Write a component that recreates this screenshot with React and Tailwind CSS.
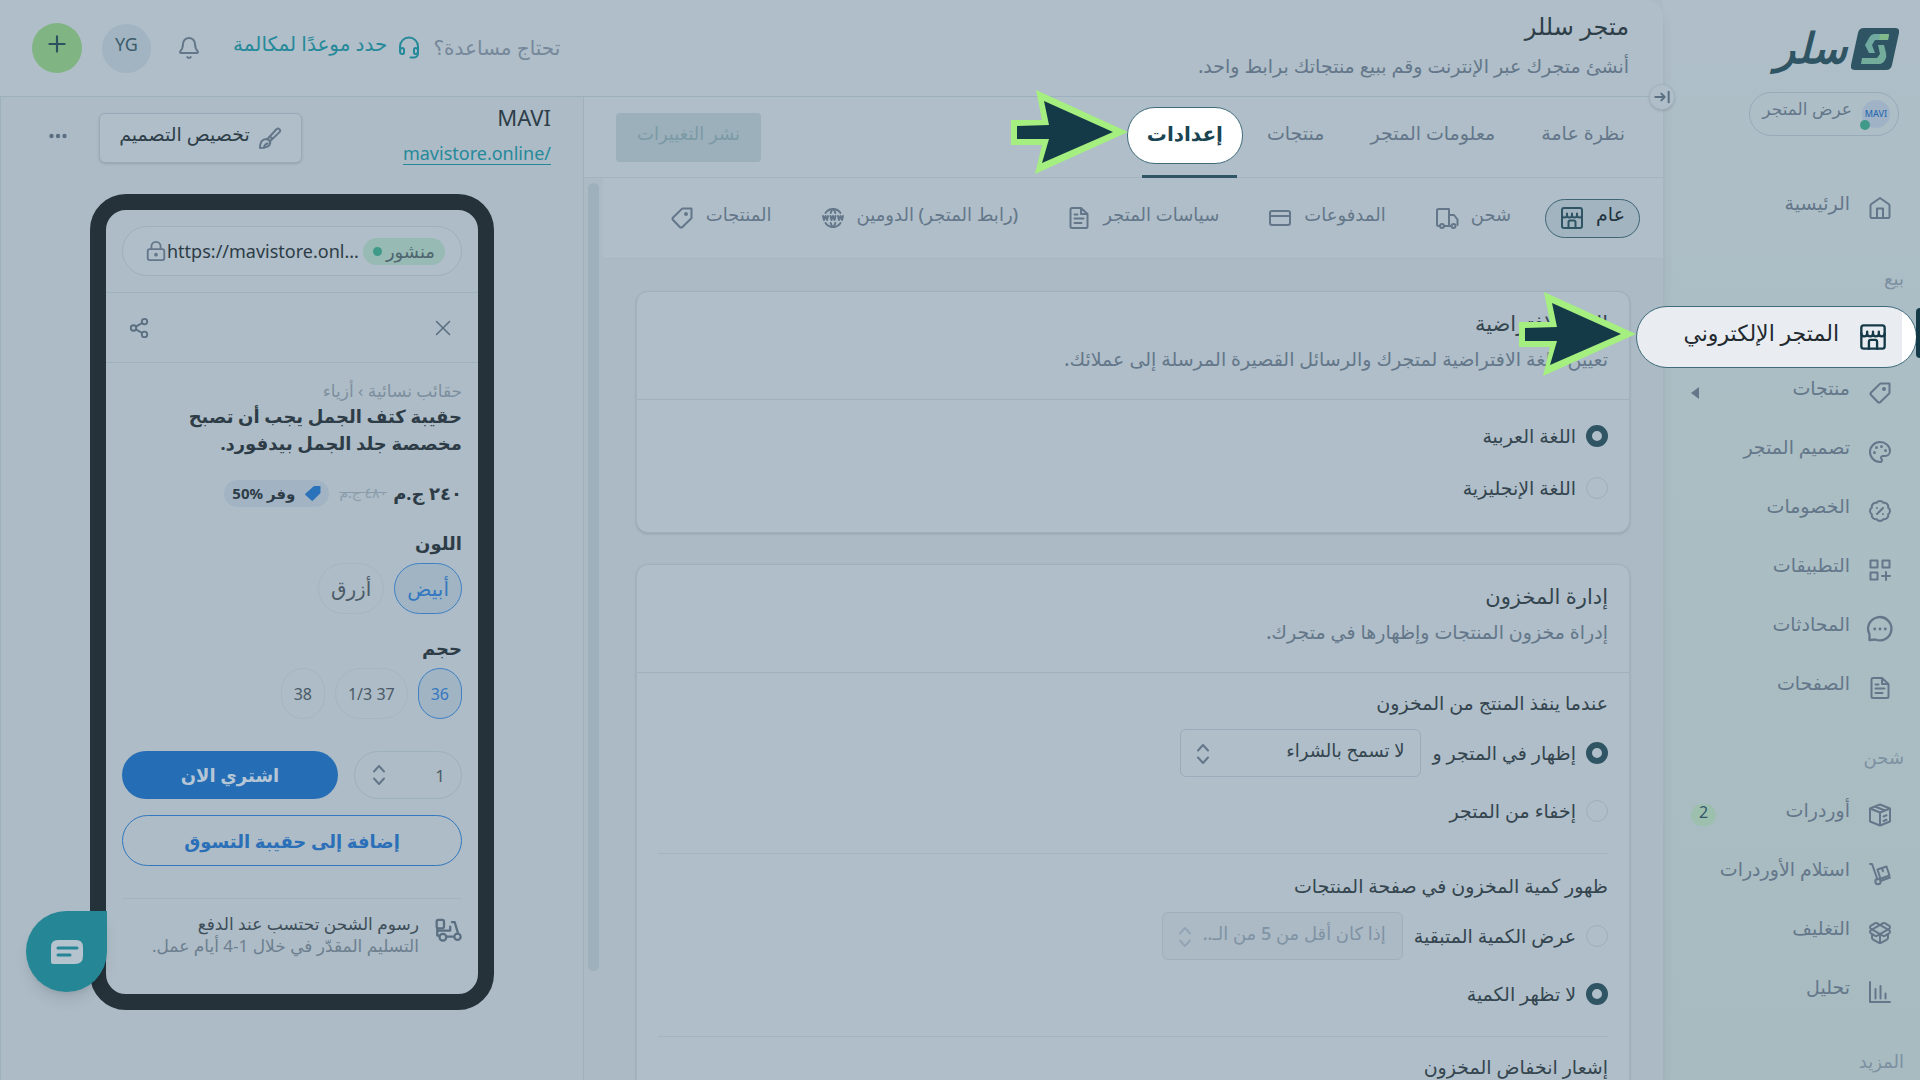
import React, { useState } from "react";
import {
  BadgePercent,
  Bell,
  CreditCard,
  LockKeyhole,
  PackageOpen,
  Palette,
  Plus,
  Share2,
  X,
} from "lucide-react";
import { TbWorldWww } from "react-icons/tb";

const Svg = ({ size = 24, strokeWidth = 2, className = "", children }) => (
  <svg
    width={size}
    height={size}
    viewBox="0 0 24 24"
    fill="none"
    stroke="currentColor"
    strokeWidth={strokeWidth}
    strokeLinecap="round"
    strokeLinejoin="round"
    className={`shrink-0 ${className}`}
    aria-hidden="true"
  >
    {children}
  </svg>
);

const HomeIcon = (props) => (
  <Svg {...props}>
    <path d="M2.5 9.5a1.5 1.5 0 0 1 .6-1.2L12 2l8.9 6.3a1.5 1.5 0 0 1 .6 1.2v11a1.5 1.5 0 0 1-1.5 1.500H4a1.5 1.5 0 0 1-1.5-1.500z" />
    <path d="M9 22v-9.500h6V22" />
  </Svg>
);

const StoreIcon = (props) => (
  <Svg {...props}>
    <rect x="2" y="2" width="20" height="20" rx="2" />
    <path d="M2 9a2.500 2.500 0 0 0 5 0 2.500 2.500 0 0 0 5 0 2.500 2.500 0 0 0 5 0 2.500 2.500 0 0 0 5 0M7 9V7.500M12 9V7.500M17 9V7.500" />
    <path d="M8.500 22v-6a1.500 1.500 0 0 1 1.500-1.500h4a1.500 1.500 0 0 1 1.500 1.500v6" />
  </Svg>
);

const TagIcon = (props) => (
  <Svg {...props}>
    <path d="M21.500 2.500H13a2 2 0 0 0-1.400.6l-8.500 8.400a1.800 1.800 0 0 0 0 2.500l6.700 7a1.800 1.800 0 0 0 2.600 0l8.500-8.200a2 2 0 0 0 .6-1.400z" />
    <circle cx="16" cy="8" r="1" fill="currentColor" />
  </Svg>
);

const AppsIcon = (props) => (
  <Svg {...props}>
    <path d="M2.500 2.500h7v7h-7zM14.500 2.500h7v7h-7zM2.500 14.500h7v7h-7zM18 14v8M14 18h8" />
  </Svg>
);

const ChatIcon = (props) => (
  <Svg {...props}>
    <path d="M3 21.500v-5A10 10 0 1 1 8 21z" />
    <path d="M7.500 12h.01M12 12h.01M16.500 12h.01" strokeWidth="2.500" />
  </Svg>
);

const PageIcon = (props) => (
  <Svg {...props}>
    <path d="M14 2H5a1.500 1.500 0 0 0-1.500 1.500v17A1.500 1.500 0 0 0 5 22h14a1.500 1.500 0 0 0 1.500-1.500V8zM14 2v6h6.500M7.500 8.500h3M7.500 12.500h9M7.500 17h7" />
  </Svg>
);

const BoxIcon = (props) => (
  <Svg {...props}>
    <path d="M12 1.500 2 5.500v13l10 4 10-4v-13zM2 5.500l10 4 10-4M12 9.500v13M7 3.500l10 4M15.500 13.500l3-1.200M15.500 18l3-1.200" />
  </Svg>
);

const DollyIcon = (props) => (
  <Svg {...props}>
    <path d="M2 2h2l5.500 15.500M12.500 19l9.500-3.500" />
    <circle cx="10" cy="19.500" r="2.700" />
    <path d="M9.500 7.500 18.500 4.500 21.500 13.500l-9 3.200zM14 6l1 3.200" />
  </Svg>
);

const ChartIcon = (props) => (
  <Svg {...props}>
    <path d="M2 2v20h20M7.500 9v9.500M12.500 6v12.500M17.500 13.500v5" />
  </Svg>
);

const TruckIcon = (props) => (
  <Svg {...props}>
    <path d="M4.500 20h-1A1.500 1.500 0 0 1 2 18.500v-14A1.500 1.500 0 0 1 3.500 3H14v17H9.500M14 9h5l3.500 4.500V19M14 20h2" />
    <circle cx="7" cy="20" r="2" />
    <circle cx="18.500" cy="20" r="2" />
  </Svg>
);

const HeadsetIcon = (props) => (
  <Svg {...props}>
    <path d="M3 13.500V10.500a9 9 0 0 1 18 0V17a4 4 0 0 1-4 4.500h-3.500" />
    <path d="M3 13.500v2A2.500 2.500 0 0 0 5.500 18 1.500 1.500 0 0 0 7 16.500v-3A1.500 1.500 0 0 0 5.500 12 2.500 2.500 0 0 0 3 14.500M21 14.500A2.500 2.500 0 0 0 18.500 12 1.500 1.500 0 0 0 17 13.500v3a1.500 1.500 0 0 0 1.500 1.500 2.500 2.500 0 0 0 2.500-2.500" />
  </Svg>
);

const BrushIcon = (props) => (
  <Svg {...props}>
    <path d="M9 13.500 18.500 3.300a2 2 0 0 1 3 2.800L11.500 15.800M12 10.500l2.500 2.500M8.500 13a3.700 3.700 0 0 1 3.700 4.200C11.800 20 9 22 2 22c0-4 .5-9 6.500-9zM6 22c0-3 2-4 3.500-4.500" />
  </Svg>
);

const ScooterIcon = (props) => (
  <Svg {...props}>
    <rect x="1.500" y="2.500" width="6.500" height="7.500" rx="1.500" />
    <path d="M2 10v6.500h1.500M2 12h11.500V8.500M10 17.500h6.500M15 4.500h2.500l3 10" />
    <circle cx="7" cy="18" r="3" />
    <circle cx="20" cy="17.500" r="2.800" />
  </Svg>
);

const SortIcon = ({ className }) => (
  <svg
    width="14"
    height="22"
    viewBox="0 0 14 22"
    fill="none"
    stroke="currentColor"
    strokeWidth="2"
    strokeLinecap="round"
    strokeLinejoin="round"
    className={`pointer-events-none shrink-0 ${className || ""}`}
    aria-hidden="true"
  >
    <path d="M2 7.500 7 2l5 5.500M2 14.500 7 20l5-5.500" />
  </svg>
);

const Pointer = ({ className }) => (
  <svg width="117" height="84" viewBox="0 0 117 84" className={className} aria-hidden="true">
    <path d="M0 30h31L25 0l92 42-93 42 7-29H0z" fill="#a5ee80" />
    <path d="M6 36l32-1-5-24 69 31-71 31 7-24H6z" fill="#143a48" />
  </svg>
);

const sellLinks = [
  { label: "منتجات", Icon: TagIcon, arrow: true },
  { label: "تصميم المتجر", Icon: Palette },
  { label: "الخصومات", Icon: BadgePercent },
  { label: "التطبيقات", Icon: AppsIcon },
  { label: "المحادثات", Icon: ChatIcon, size: 28 },
  { label: "الصفحات", Icon: PageIcon },
];

const shipLinks = [
  { label: "أوردرات", Icon: BoxIcon, count: 2 },
  { label: "استلام الأوردرات", Icon: DollyIcon },
  { label: "التغليف", Icon: PackageOpen },
  { label: "تحليل", Icon: ChartIcon },
];

const subTabs = [
  { label: "شحن", Icon: TruckIcon },
  { label: "المدفوعات", Icon: CreditCard },
  { label: "سياسات المتجر", Icon: PageIcon },
  { label: "(رابط المتجر) الدومين", Icon: TbWorldWww },
  { label: "المنتجات", Icon: TagIcon },
];

const NavItem = ({ label, Icon, size = 24, arrow, count }) => (
  <li>
    <a href="#" className="flex h-[59px] items-center pr-7 pl-7 text-[#64778a]">
      <span className="flex w-6 shrink-0 justify-center">
        <Icon size={size} className="shrink-0" />
      </span>
      <span className="mr-[18px] pb-2.5 text-[19px] leading-6 font-medium whitespace-nowrap">{label}</span>
      {arrow && (
        <svg width="8" height="12" viewBox="0 0 8 12" className="mr-auto" fill="currentColor" aria-hidden="true">
          <path d="M8 0v12L0 6z" />
        </svg>
      )}
      {count && (
        <span className="mr-auto flex h-[22px] w-[25px] items-start justify-center rounded-full bg-[#9dbfae] text-base leading-4 text-[#33566a]">
          {count}
        </span>
      )}
    </a>
  </li>
);

const Sidebar = () => (
  <aside className="w-[257px] shrink-0 bg-linear-to-b from-[#afbec8] via-[#abbec4] via-40% to-[#a8bbc0]">
    <div className="flex items-center gap-1 pt-7 pr-[21px]">
      <svg width="48" height="42" viewBox="0 0 48 42" aria-hidden="true">
        <path d="M13 0h31q5 0 4 5l-7 32q-1 5-6 5H4q-5 0-4-5L7 5q1-5 6-5z" fill="#2f5463" />
        <path d="M14 17l4-7q2-4 6-4h14l-1 6H24l-3 5 3 8h-6z" fill="#6fa9a0" />
        <path d="M29 6h9l-1 6h-9z" fill="#82b98a" />
        <path d="M27 17h6l2 8q1 4-1 7-2 4-6 4H10l1-6h15l3-4z" fill="#74ac9c" />
      </svg>
      <span className="pb-1 text-[42px] leading-[38px] font-black text-[#2f5463] italic">سلر</span>
    </div>

    <a
      href="#"
      className="mt-[22px] mr-[21px] flex h-11 w-[150px] items-center gap-2.5 rounded-full border border-[#98a9b8] pr-2 text-[#64778a]"
    >
      <span className="relative flex size-7 items-center justify-center rounded-full bg-[#a0b3c6] text-[9px] font-medium text-[#2a6bb0]" dir="ltr">
        MAVI
        <span className="absolute -bottom-0.5 -left-0.5 size-2.5 rounded-full bg-[#409a8a]"></span>
      </span>
      <span className="pb-2.5 text-[17px] leading-6 font-medium whitespace-nowrap">عرض المتجر</span>
    </a>

    <nav className="mt-[42px]">
      <ul>
        <NavItem label="الرئيسية" Icon={HomeIcon} />
      </ul>
      <h2 className="mt-[29px] pr-4 text-lg leading-6 text-[#7d90a2]">بيع</h2>
      <ul className="mt-[18px]">
        <li className="relative z-20 h-[55px]">
          <a
            href="#"
            className="absolute -top-0.5 right-[3px] flex h-[62px] w-[281px] items-center rounded-full border border-[#3f6b7a] bg-linear-to-l from-white from-5% to-[#e9edf1] to-5% pr-[29px] text-[#22292f]"
          >
            <StoreIcon size={28} className="text-[#143a48]" />
            <span className="mr-5 pb-2.5 text-[22px] leading-7 whitespace-nowrap">المتجر الإلكتروني</span>
          </a>
          <span className="absolute top-0 right-0 h-[50px] w-1 rounded-l-md bg-[#143a48]"></span>
          <Pointer className="absolute -top-4 right-[284px]" />
        </li>
        {sellLinks.map((link) => (
          <NavItem key={link.label} {...link} />
        ))}
      </ul>
      <h2 className="mt-7 pr-4 text-lg leading-6 text-[#7d90a2]">شحن</h2>
      <ul className="mt-4">
        {shipLinks.map((link) => (
          <NavItem key={link.label} {...link} />
        ))}
      </ul>
      <h2 className="mt-7 pr-4 text-lg leading-6 text-[#7d90a2]">المزيد</h2>
    </nav>
  </aside>
);

const Header = () => (
  <header className="relative flex h-[97px] shrink-0 items-center justify-between rounded-tr-2xl border-b border-[#9db0be] bg-[#afbec8] pr-[34px] pl-8">
    <div className="self-start pt-2.5">
      <h1 className="text-2xl leading-8 text-[#2e3e49]">متجر سللر</h1>
      <p className="mt-3 text-[19px] leading-6 font-medium text-[#64778a]">
        أنشئ متجرك عبر الإنترنت وقم ببيع منتجاتك برابط واحد.
      </p>
    </div>
    <div className="flex items-center">
      <span className="text-xl leading-7 text-[#76889a]">تحتاج مساعدة؟</span>
      <a href="#" className="mr-3 flex items-center gap-2.5 text-[#26899a]">
        <HeadsetIcon size={24} />
        <span className="pb-2 text-xl leading-6">حدد موعدًا لمكالمة</span>
      </a>
      <button aria-label="الإشعارات" className="mr-8 text-[#64778a]">
        <Bell size={24} />
      </button>
      <button className="mr-[26px] flex size-[49px] justify-center rounded-full bg-[#a2b4c1] pt-2 text-lg leading-6 text-[#3a5c6b]">
        YG
      </button>
      <button aria-label="إضافة" className="mr-5 flex size-[50px] justify-center rounded-full bg-[#80b482] pt-2 text-[#2c5160]">
        <Plus size={26} />
      </button>
    </div>
    <button
      aria-label="طي القائمة"
      className="absolute top-[84px] -right-3 z-10 flex size-[26px] items-center justify-center rounded-full border border-[#a3b4c0] bg-[#afbec8] text-[#5b6f82] shadow"
    >
      <Svg size={16} strokeWidth={3}>
        <path d="M2 12h14M11 7l5 5-5 5M22 4v16" />
      </Svg>
    </button>
  </header>
);

const Tabs = () => (
  <div className="flex h-[81px] shrink-0 items-center justify-between border-b border-[#a3b4c0] bg-[#afbec8] pr-[38px] pl-8">
    <nav className="flex h-full gap-[46px] text-[19px] font-medium text-[#64778a]">
      <a href="#" className="pt-6 leading-6">نظرة عامة</a>
      <a href="#" className="pt-6 leading-6">معلومات المتجر</a>
      <a href="#" className="pt-6 leading-6">منتجات</a>
      <div className="relative -mr-[22px] pt-[10px]">
        <a
          href="#"
          className="flex h-[57px] w-[116px] items-center justify-center rounded-[28px] border border-[#3f6b7a] bg-white pb-1 text-xl leading-6 font-bold text-[#1b4453]"
        >
          إعدادات
        </a>
        <span className="absolute right-1.5 -bottom-px h-[3px] w-[95px] bg-[#2f5463]"></span>
        <Pointer className="absolute top-[-7px] right-[115px]" />
      </div>
    </nav>
    <button disabled className="h-[49px] w-[145px] rounded bg-[#9bb0bb] pb-2 text-lg font-medium text-[#7b9aa5]">
      نشر التغييرات
    </button>
  </div>
);

const SubTabs = () => (
  <div className="flex h-[81px] items-center gap-[19px] border-b border-[#a8b8c3] bg-[#afbec8] pr-[23px]">
    <button className="flex h-[39px] items-center gap-3 rounded-full border border-[#3f6574] bg-[#a1b4c0] px-3.5 font-medium text-[#22333d]">
      <span className="pb-2 text-[19px] leading-6">عام</span>
      <StoreIcon size={24} className="text-[#2f5463]" />
    </button>
    {subTabs.map(({ label, Icon }) => (
      <button key={label} className="flex items-center gap-3 px-[15px] text-[#64778a]">
        <span className="pb-2 text-lg leading-6 font-medium whitespace-nowrap">{label}</span>
        <Icon size={24} />
      </button>
    ))}
  </div>
);

const Option = ({ name, label, checked, onChange, children }) => (
  <div className="flex items-center">
    <label className="flex items-center gap-2.5 text-[19px] leading-6 font-medium text-[#34454f]">
      <input
        type="radio"
        name={name}
        checked={checked}
        onChange={onChange}
        className="size-[22px] appearance-none rounded-full border border-[#9eafbc] checked:border-[6px] checked:border-[#2f5463]"
      />
      {label}
    </label>
    {children}
  </div>
);

const SelectBox = ({ label, option, disabled }) => (
  <div className="relative mr-[11px]">
    <select
      aria-label={label}
      disabled={disabled}
      className="h-12 w-[241px] appearance-none rounded-md border border-[#9aacbb] bg-transparent pr-4 pb-1.5 pl-10 text-lg font-medium text-[#34454f] disabled:border-[#9fb0bd] disabled:bg-[#abbac5] disabled:text-[#8093a4] disabled:opacity-100"
    >
      <option>{option}</option>
    </select>
    <SortIcon className={disabled ? "absolute top-3.5 left-4 text-[#93a5b4]" : "absolute top-3.5 left-4 text-[#64778a]"} />
  </div>
);

const Card = ({ title, text, children }) => (
  <section className="rounded-xl border border-[#a0b1be] bg-[#afbec8] shadow-sm">
    <div className="border-b border-[#a0b1be] px-[21px] pt-[15px] pb-6">
      <h2 className="text-[21px] leading-8 font-medium text-[#34454f]">{title}</h2>
      <p className="mt-1 text-[19px] leading-8 font-medium text-[#64778a]">{text}</p>
    </div>
    <div className="px-[21px]">{children}</div>
  </section>
);

const Settings = () => {
  const [lang, setLang] = useState("ar");
  const [stock, setStock] = useState("show");
  const [amount, setAmount] = useState("hide");

  return (
    <div className="flex min-w-0 flex-1 flex-col border-l border-[#a0b1be]">
      <Tabs />
      <div className="flex min-h-0 flex-1">
        <div className="min-w-0 flex-1 overflow-hidden">
          <SubTabs />
          <div className="flex flex-col gap-[31px] pt-8 pr-[33px] pl-[33px]">
            <Card title="اللغة الافتراضية" text="تعيين اللغة الافتراضية لمتجرك والرسائل القصيرة المرسلة إلى عملائك.">
              <div className="flex flex-col gap-7 pt-6 pb-8">
                <Option name="lang" label="اللغة العربية" checked={lang === "ar"} onChange={() => setLang("ar")} />
                <Option name="lang" label="اللغة الإنجليزية" checked={lang === "en"} onChange={() => setLang("en")} />
              </div>
            </Card>

            <Card title="إدارة المخزون" text="إدراة مخزون المنتجات وإظهارها في متجرك.">
              <div className="pt-[18px] pb-[30px]">
                <h3 className="text-[19px] leading-6 font-medium text-[#34454f]">عندما ينفذ المنتج من المخزون</h3>
                <div className="mt-3.5 mb-[22px]">
                  <Option name="stock" label="إظهار في المتجر و" checked={stock === "show"} onChange={() => setStock("show")}>
                    <SelectBox label="الشراء عند نفاذ المخزون" option="لا تسمح بالشراء" />
                  </Option>
                </div>
                <Option name="stock" label="إخفاء من المتجر" checked={stock === "hide"} onChange={() => setStock("hide")} />
              </div>
              <div className="border-t border-[#a3b4c0] pt-5 pb-[30px]">
                <h3 className="text-[19px] leading-6 font-medium text-[#34454f]">ظهور كمية المخزون في صفحة المنتجات</h3>
                <div className="mt-3.5 mb-[22px]">
                  <Option name="amount" label="عرض الكمية المتبقية" checked={amount === "show"} onChange={() => setAmount("show")}>
                    <SelectBox label="حد الكمية" option="إذا كان أقل من 5 من الـ..." disabled />
                  </Option>
                </div>
                <Option name="amount" label="لا تظهر الكمية" checked={amount === "hide"} onChange={() => setAmount("hide")} />
              </div>
              <div className="border-t border-[#a3b4c0] pt-[18px] pb-8">
                <h3 className="text-[19px] leading-6 font-medium text-[#34454f]">إشعار انخفاض المخزون</h3>
              </div>
            </Card>
          </div>
        </div>
        <div className="flex w-[19px] shrink-0 justify-end pt-[5px] pl-1">
          <div className="h-[788px] w-[11px] rounded-full bg-[#9fb0bd]"></div>
        </div>
      </div>
    </div>
  );
};

const Chip = ({ active, children }) => (
  <button
    className={
      active
        ? "h-[51px] rounded-full border border-[#3f80c4] bg-[#a0b4c4] px-3 text-[#3478c0]"
        : "h-[51px] rounded-full border border-[#a5b5c2] px-3 text-[#4a5a66]"
    }
  >
    {children}
  </button>
);

const Phone = () => (
  <div className="mx-auto mt-[29px] flex h-[816px] w-[404px] flex-col rounded-[36px] border-16 border-[#25323a] bg-[#adbcc6] text-[#2d3c47]">
    <div className="border-b border-[#a0b1be] px-4 pt-4 pb-4">
      <div className="flex h-[50px] items-center justify-between rounded-full border border-[#9db0be] bg-[#afbec8] pr-4 pl-[22px]">
        <span className="flex h-[27px] items-center gap-1 rounded-full bg-[#97bab4] px-2.5 text-lg leading-6 text-[#4f6670]">
          منشور
          <span className="size-[9px] rounded-full bg-[#409a8a]"></span>
        </span>
        <span dir="ltr" className="flex items-center text-lg">
          <LockKeyhole size={22} className="text-[#64778a]" />
          https://mavistore.onl...
        </span>
      </div>
    </div>
    <div className="flex h-[70px] items-center justify-between border-b border-[#a0b1be] px-[22px] text-[#5b6f82]">
      <button aria-label="إغلاق">
        <X size={26} strokeWidth={1.5} />
      </button>
      <button aria-label="مشاركة">
        <Share2 size={22} />
      </button>
    </div>
    <div className="px-4 pt-4">
      <p className="text-[17px] leading-6 text-[#7d8f9f]">حقائب نسائية › أزياء</p>
      <h2 className="text-lg leading-[27px] font-bold">
        حقيبة كتف الجمل يجب أن تصبح
        <br />
        مخصصة جلد الجمل بيدفورد.
      </h2>
      <div className="mt-[22px] flex h-7 items-center whitespace-nowrap">
        <span className="text-lg font-bold">٢٤٠ ج.م</span>
        <del className="mr-1.5 text-sm text-[#8a9cab]">٤٨٠ ج.م</del>
        <span className="mr-2.5 flex h-[27px] items-center gap-2.5 rounded-full bg-[#a2b4c4] px-2 text-[15px] font-bold">
          <svg width="16" height="16" viewBox="0 0 16 16" fill="#2a72ba" aria-hidden="true">
            <path d="M9 1h6.500v7L8 15.500a1 1 0 0 1-1.500 0L.5 10a1 1 0 0 1 0-1.500z" />
          </svg>
          <span>
            وفر <bdi dir="ltr">50%</bdi>
          </span>
        </span>
      </div>
      <h3 className="mt-6 text-lg leading-6 font-bold">اللون</h3>
      <div className="mt-2 flex gap-2.5 text-xl">
        <Chip active>أبيض</Chip>
        <Chip>أزرق</Chip>
      </div>
      <h3 className="mt-[22px] text-lg leading-6 font-bold">حجم</h3>
      <div className="mt-2 flex gap-2.5 text-base">
        <Chip active>36</Chip>
        <Chip>37 1/3</Chip>
        <Chip>38</Chip>
      </div>
      <div className="mt-8 flex gap-4">
        <div className="relative w-[108px] shrink-0">
          <input
            type="text"
            aria-label="الكمية"
            defaultValue="1"
            className="h-12 w-full rounded-full border border-[#9db0be] bg-transparent pr-4 text-[17px] text-[#4a5a66]"
          />
          <SortIcon className="absolute top-[13px] left-[18px] text-[#64778a]" />
        </div>
        <button className="h-12 flex-1 rounded-full bg-[#256db5] text-lg font-bold text-[#b4c6d6]">اشتري الان</button>
      </div>
      <button className="mt-4 h-[51px] w-full rounded-full border border-[#3377be] text-lg font-bold text-[#2a6fb8]">
        إضافة إلى حقيبة التسوق
      </button>
      <div className="mt-8 flex gap-4 border-t border-[#a3b4c0] pt-3.5">
        <ScooterIcon size={27} className="mt-1 text-[#5b6f82]" />
        <div className="text-[17px] leading-[22px]">
          <p className="text-[#3d4e5a]">رسوم الشحن تحتسب عند الدفع</p>
          <p className="text-[#6d7f8f]">التسليم المقدّر في خلال 1-4 أيام عمل.</p>
        </div>
      </div>
    </div>
  </div>
);

const Preview = () => (
  <div className="w-[583px] shrink-0 border-l border-[#9db0be] bg-[#acbbc6]">
    <div className="flex items-start pt-1.5 pr-8 pl-12">
      <div>
        <h2 className="text-[22px] leading-7 text-[#2e3e49]">MAVI</h2>
        <a href="#" dir="ltr" className="mt-2.5 block text-lg leading-6 text-[#26899a] underline underline-offset-4">
          mavistore.online/
        </a>
      </div>
      <button className="mt-2.5 mr-auto flex h-[50px] w-[203px] items-center justify-center gap-2 rounded-md border border-[#98aab9] bg-[#afbec8] text-[#2e3e49] shadow-sm">
        <BrushIcon size={24} className="text-[#64778a]" />
        <span className="pb-2 text-[19px] leading-6 font-medium">تخصيص التصميم</span>
      </button>
      <button aria-label="المزيد" className="mt-6 mr-8 text-[#5b6f82]">
        <svg width="18" height="18" viewBox="0 0 18 18" fill="currentColor" aria-hidden="true">
          <circle cx="2.500" cy="9" r="2.200" />
          <circle cx="9" cy="9" r="2.200" />
          <circle cx="15.500" cy="9" r="2.200" />
        </svg>
      </button>
    </div>
    <Phone />
  </div>
);

const App = () => {
  return (
    <div
      dir="rtl"
      className="relative flex h-screen overflow-hidden bg-[#abbac5] font-['Noto_Sans','DejaVu_Sans',sans-serif]"
    >
      <Sidebar />
      <main className="flex min-w-0 flex-1 flex-col rounded-tr-2xl bg-[#abbac5] shadow-lg">
        <Header />
        <div className="flex min-h-0 flex-1">
          <Settings />
          <Preview />
        </div>
      </main>
      <button
        aria-label="الدردشة"
        className="absolute bottom-[88px] left-[26px] flex size-[81px] items-center justify-center rounded-full rounded-tr-lg bg-[#258796] shadow-lg"
      >
        <svg width="32" height="24" viewBox="0 0 32 24" aria-hidden="true">
          <path d="M7 0h18q7 0 7 7v9q0 8-8 8H2q-2 0-2-2V7q0-7 7-7z" fill="#b4c3cd" />
          <path d="M7 8h19M7 15h12" stroke="#258796" strokeWidth="3" strokeLinecap="round" />
        </svg>
      </button>
    </div>
  );
};

export default App;
